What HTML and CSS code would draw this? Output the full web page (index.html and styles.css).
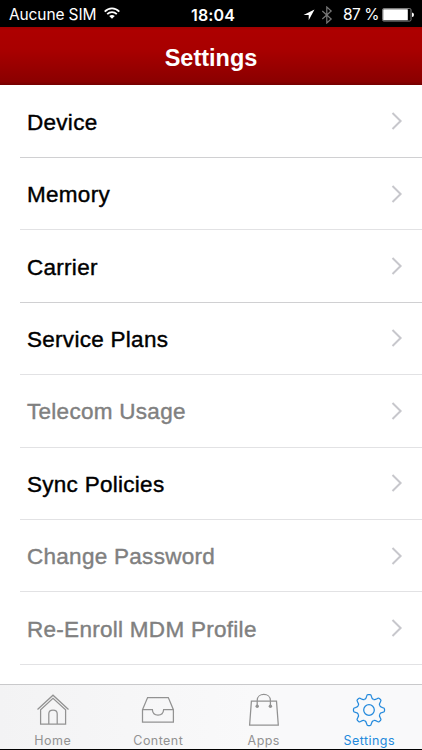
FILE: index.html
```html
<!DOCTYPE html>
<html lang="en">
<head>
<meta charset="utf-8">
<title>Settings</title>
<link rel="stylesheet" href="styles.css">
</head>
<body>
<div class="screen">
  <div class="status">
    <div class="carrier"><span class="sim">Aucune SIM</span>
      <svg class="wifi" width="16" height="13" viewBox="0 0 16 13" fill="none" stroke="#fff" stroke-width="1.8"><path d="M.7 4.6C4.8 .3 11.2 .3 15.3 4.6M3.2 7.2C5.9 4.5 10.1 4.5 12.8 7.2"/><path d="M8 11.8 5.2 9.1Q8 6.7 10.8 9.1Z" fill="#fff" stroke="none"/></svg>
    </div>
    <span class="time">18:04</span>
    <div class="indicators">
      <svg width="12" height="12" viewBox="0 0 12 12"><path d="M11.5 .5 .5 6.1H5.7V11.3Z" fill="#fff"/></svg>
      <svg class="bt" width="12" height="18" viewBox="0 0 12 18" fill="none" stroke="#777" stroke-width="1.2"><path d="M1.3 5 10.2 13 5.8 17V1L10.2 5 1.3 13"/></svg>
      <span class="percent">87 %</span>
      <svg class="battery" width="33" height="14" viewBox="0 0 33 14"><rect x=".5" y=".5" width="28.5" height="12.6" rx="1.4" fill="none" stroke="#999" stroke-width=".8"/><rect x="1.2" y="1.3" width="24.6" height="11" rx=".5" fill="#fff"/><path d="M30 4.5Q32 4.7 32 6.8T30 9.1Z" fill="#fff"/></svg>
    </div>
  </div>
  <header class="header"><h1>Settings</h1></header>
  <main class="list">
    <div class="row"><span class="label">Device</span><svg class="chevron" viewBox="0 0 12 18"><path d="M1.5 1 9.6 9 1.5 17"/></svg></div>
    <div class="row"><span class="label">Memory</span><svg class="chevron" viewBox="0 0 12 18"><path d="M1.5 1 9.6 9 1.5 17"/></svg></div>
    <div class="row"><span class="label">Carrier</span><svg class="chevron" viewBox="0 0 12 18"><path d="M1.5 1 9.6 9 1.5 17"/></svg></div>
    <div class="row"><span class="label">Service Plans</span><svg class="chevron" viewBox="0 0 12 18"><path d="M1.5 1 9.6 9 1.5 17"/></svg></div>
    <div class="row disabled"><span class="label">Telecom Usage</span><svg class="chevron" viewBox="0 0 12 18"><path d="M1.5 1 9.6 9 1.5 17"/></svg></div>
    <div class="row"><span class="label">Sync Policies</span><svg class="chevron" viewBox="0 0 12 18"><path d="M1.5 1 9.6 9 1.5 17"/></svg></div>
    <div class="row disabled"><span class="label">Change Password</span><svg class="chevron" viewBox="0 0 12 18"><path d="M1.5 1 9.6 9 1.5 17"/></svg></div>
    <div class="row disabled"><span class="label">Re-Enroll MDM Profile</span><svg class="chevron" viewBox="0 0 12 18"><path d="M1.5 1 9.6 9 1.5 17"/></svg></div>
  </main>
  <nav class="tabs">
    <div class="tab"><svg viewBox="0 0 34 34"><path d="M1.5 16.5 17 2.2 32.5 16.5M4.6 16.8V31.2H29.6V16.8L17 5.4ZM12.8 31V20.7Q12.8 17 17 17T21.2 20.7V31"/></svg><span>Home</span></div>
    <div class="tab"><svg viewBox="0 0 34 34"><path d="M1.5 16.7 6.6 4.6H27.3L32.4 16.7V29H1.5ZM1.5 16.7H11.4C11.6 20 13.8 22 17 22S22.4 20 22.6 16.7H32.4"/></svg><span>Content</span></div>
    <div class="tab"><svg viewBox="0 0 34 34"><path d="M4.4 8.1H29.5L31.3 32.1H2.6ZM10.2 12.5V7.5C10.2-.6 23.4-.6 23.4 7.5V12.5"/><circle class="dot" cx="10.2" cy="13.3" r="1.7"/><circle class="dot" cx="23.4" cy="13.3" r="1.7"/></svg><span>Apps</span></div>
    <div class="tab active"><svg viewBox="-17 -17 34 34"><defs><path id="tooth" d="M-4.4-10.6C-3-11.2-2.7-12-2.4-13.6Q-2.1-15.5-1-15.5H1Q2.1-15.5 2.4-13.6C2.7-12 3-11.2 4.4-10.6"/></defs><use href="#tooth"/><use href="#tooth" transform="rotate(45)"/><use href="#tooth" transform="rotate(90)"/><use href="#tooth" transform="rotate(135)"/><use href="#tooth" transform="rotate(180)"/><use href="#tooth" transform="rotate(225)"/><use href="#tooth" transform="rotate(270)"/><use href="#tooth" transform="rotate(315)"/><circle r="5.3"/></svg><span>Settings</span></div>
  </nav>
</div>
</body>
</html>
```
FILE: styles.css
```css
* { box-sizing: border-box; }
body { margin: 0; font-family: "Liberation Sans", Arial, sans-serif; background: #000; }
.screen { width: 422px; height: 750px; display: flex; flex-direction: column; overflow: hidden; background: #fff; border-bottom: 1px solid #000; }
.status { flex: none; height: 27px; padding: 2px 7px 0 9px; background: #000; color: #fff; display: grid; grid-template-columns: 1fr auto 1fr; align-items: center; font: 16px/24px Inter, sans-serif; }
.carrier { display: flex; align-items: center; gap: 8px; }
.sim { font-size: 15.5px; letter-spacing: -.12px; width: 87px; white-space: nowrap; }
.wifi { margin-top: -3px; }
.time { font-weight: 600; font-size: 16px; letter-spacing: .1px; padding-left: 2px; }
.indicators { display: flex; align-items: center; justify-content: flex-end; }
.indicators svg { flex: none; }
.bt { margin-left: 6px; }
.percent { margin-left: 10px; white-space: nowrap; width: 34px; font-size: 15.5px; letter-spacing: -.5px; }
.indicators .battery { margin-left: 5px; }
.header { flex: none; height: 58px; background: linear-gradient(#a00000 0, #ad0000 6%, #a80000 40%, #8b0000 94%, #740000 100%); display: flex; align-items: center; justify-content: center; }
h1 { margin: 3px 0 0; font-size: 23.5px; line-height: 28px; font-weight: 700; color: #fff; }
.list { flex: 1; min-height: 0; padding: .6px 0 0 20px; }
.row { height: 72.4px; padding: 3px 19px 0 7px; border-bottom: 1px solid #e2e2e4; display: flex; align-items: center; justify-content: space-between; color: #000; }
.row:nth-child(1), .row:nth-child(3) { border-color: #d0d0d2; }
.disabled { color: #808080; }
.label { font-size: 22.5px; line-height: 28px; letter-spacing: .28px; -webkit-text-stroke: .4px currentColor; }
.chevron { width: 12px; height: 18px; margin-top: -3px; fill: none; stroke: #c7c7cc; stroke-width: 2; }
.tabs { flex: none; height: 65px; border-top: 1px solid #c9c9cb; background: linear-gradient(90deg, #f3f3f4, #f9f9fa 60%); display: grid; grid-template-columns: repeat(4, 1fr); }
.tab { display: flex; flex-direction: column; align-items: center; color: #929292; padding-top: 8px; }
.tab svg { width: 34px; height: 34px; fill: none; stroke: currentColor; stroke-width: 1.25; }
.tab .dot { fill: currentColor; stroke: none; }
.tab span { font: 12.5px/16px Inter, sans-serif; letter-spacing: .45px; margin-top: 6px; }
.active { color: #2389dc; }
```
